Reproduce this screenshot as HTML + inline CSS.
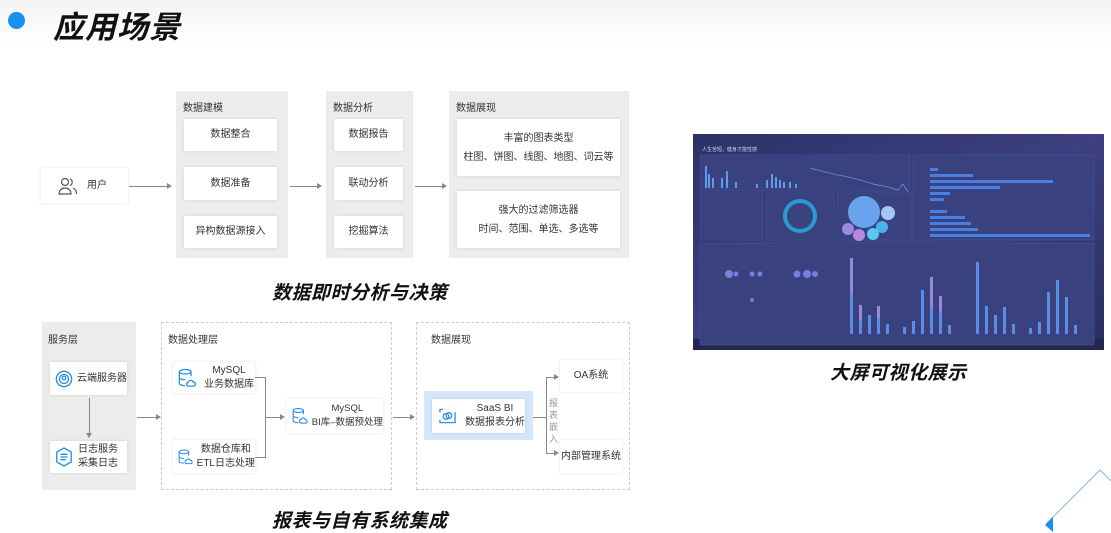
<!DOCTYPE html>
<html><head><meta charset="utf-8">
<style>
*{margin:0;padding:0;box-sizing:border-box}
body{width:1111px;height:532px;overflow:hidden;background:#fff;position:relative;font-family:"Liberation Sans","Noto Sans CJK SC",sans-serif;color:#333}
.a{position:absolute}
.hdr{left:0;top:0;width:1111px;height:48px;background:linear-gradient(#f4f4f4,#fff)}
.dot{left:8px;top:12px;width:17px;height:17px;border-radius:50%;background:#1890f0}
.title{left:53px;top:2px;font-size:31px;font-weight:bold;font-style:italic;color:#111;letter-spacing:1px}
.gp{background:#ececec}
.wb{background:#fff;box-shadow:0 0 3px rgba(0,0,0,.12);display:flex;align-items:center;justify-content:center;text-align:center;font-size:10px;line-height:14px;color:#333;white-space:nowrap}
.wb span{white-space:nowrap}
.pt{font-size:10px;color:#333}
.cap{font-size:19px;font-weight:bold;font-style:italic;color:#111;letter-spacing:.5px}
.hl{background:#888;height:1px}
.dash{border:1px dashed #ccc}
.arr{position:absolute;width:0;height:0;border-top:3px solid transparent;border-bottom:3px solid transparent;border-left:5px solid #888}
.vl{background:#888;width:1px}
</style></head><body>
<div class="a hdr"></div>
<div class="a dot"></div>
<div class="a title">应用场景</div>

<div class="a wb" style="left:41px;top:168px;width:87px;height:35px;justify-content:flex-start;padding-left:16px">
<svg width="22" height="20" viewBox="0 0 22 20" fill="none" stroke="#555" stroke-width="1.2"><circle cx="8" cy="6" r="3.5"/><path d="M2 18c0-4 3-6 6-6s6 2 6 6z"/><path d="M13 3a3.5 3.5 0 0 1 0 6.5"/><path d="M16 12c2 .8 3.5 3 3.5 6"/></svg>
<span style="margin-left:8px">用户</span></div>
<div class="a hl" style="left:129px;top:186px;width:38px"></div><div class="arr" style="left:167px;top:183px"></div>

<div class="a gp" style="left:176px;top:91px;width:112px;height:167px"></div>
<div class="a pt" style="left:183px;top:99px">数据建模</div>
<div class="a wb" style="left:184px;top:119px;width:93px;height:32px">数据整合</div>
<div class="a wb" style="left:184px;top:167px;width:93px;height:33px">数据准备</div>
<div class="a wb" style="left:184px;top:216px;width:93px;height:32px">异构数据源接入</div>
<div class="a hl" style="left:290px;top:186px;width:27px"></div><div class="arr" style="left:317px;top:183px"></div>

<div class="a gp" style="left:326px;top:91px;width:87px;height:167px"></div>
<div class="a pt" style="left:333px;top:99px">数据分析</div>
<div class="a wb" style="left:334px;top:119px;width:69px;height:32px">数据报告</div>
<div class="a wb" style="left:334px;top:167px;width:69px;height:33px">联动分析</div>
<div class="a wb" style="left:334px;top:216px;width:69px;height:32px">挖掘算法</div>
<div class="a hl" style="left:415px;top:186px;width:27px"></div><div class="arr" style="left:442px;top:183px"></div>

<div class="a gp" style="left:449px;top:91px;width:180px;height:167px"></div>
<div class="a pt" style="left:456px;top:99px">数据展现</div>
<div class="a wb" style="left:457px;top:119px;width:163px;height:57px;flex-direction:column;line-height:19px">丰富的图表类型<br>柱图、饼图、线图、地图、词云等</div>
<div class="a wb" style="left:457px;top:191px;width:163px;height:57px;flex-direction:column;line-height:19px">强大的过滤筛选器<br>时间、范围、单选、多选等</div>
<div class="a cap" style="left:272px;top:278px">数据即时分析与决策</div>

<div class="a gp" style="left:42px;top:322px;width:94px;height:168px"></div>
<div class="a pt" style="left:48px;top:331px">服务层</div>
<div class="a wb" style="left:50px;top:362px;width:77px;height:33px;justify-content:flex-start;padding-left:5px">
<svg width="18" height="18" viewBox="0 0 20 20" fill="none" stroke="#2a8de8" stroke-width="1.5"><circle cx="10" cy="10" r="8.5"/><circle cx="10" cy="10" r="5"/><circle cx="10" cy="9" r="2"/></svg><span style="margin-left:4px">云端服务器</span></div>
<div class="a vl" style="left:89px;top:398px;height:36px"></div>
<div class="arr" style="left:86px;top:433px;border-left:3px solid transparent;border-right:3px solid transparent;border-top:5px solid #888;border-bottom:0"></div>
<div class="a wb" style="left:50px;top:441px;width:77px;height:32px;justify-content:flex-start;padding-left:5px">
<svg width="18" height="20" viewBox="0 0 20 22" fill="none" stroke="#2a8de8" stroke-width="1.5"><path d="M10 1l8 4.5v11L10 21 2 16.5v-11z"/><path d="M6 8h8M6 11h8M6 14h6"/></svg><span style="margin-left:5px;text-align:left">日志服务<br>采集日志</span></div>
<div class="a hl" style="left:137px;top:417px;width:19px"></div><div class="arr" style="left:156px;top:414px"></div>

<div class="a dash" style="left:161px;top:322px;width:231px;height:168px"></div>
<div class="a pt" style="left:168px;top:331px">数据处理层</div>
<svg width="0" height="0" style="position:absolute"><defs><symbol id="db" viewBox="0 0 20 22"><g fill="none" stroke="#2a8de8" stroke-width="1.4"><ellipse cx="8" cy="4" rx="6.5" ry="2.5"/><path d="M1.5 4v13c0 1.4 3 2.5 6.5 2.5M14.5 4v5M1.5 10.5c0 1.4 3 2.5 6.5 2.5"/><path d="M11 20h7a2.3 2.3 0 0 0-1-4.4 3 3 0 0 0-5.6 0A2.3 2.3 0 0 0 11 20z"/></g></symbol></defs></svg>
<div class="a wb" style="left:173px;top:362px;width:82px;height:31px;justify-content:flex-start;padding-left:5px"><svg width="18" height="20"><use href="#db"/></svg><span style="margin-left:8px">MySQL<br>业务数据库</span></div>
<div class="a wb" style="left:173px;top:440px;width:82px;height:33px;justify-content:flex-start;padding-left:5px"><svg width="18" height="20"><use href="#db"/></svg><span style="margin-left:4px">数据仓库和<br>ETL日志处理</span></div>
<div class="a hl" style="left:255px;top:377px;width:10px"></div>
<div class="a hl" style="left:255px;top:457px;width:10px"></div>
<div class="a vl" style="left:265px;top:377px;height:81px"></div>
<div class="a hl" style="left:265px;top:417px;width:15px"></div><div class="arr" style="left:280px;top:414px"></div>
<div class="a wb" style="left:287px;top:399px;width:96px;height:34px;justify-content:flex-start;padding-left:5px"><svg width="18" height="20"><use href="#db"/></svg><span style="margin-left:4px;font-size:9.5px">MySQL<br>BI库–数据预处理</span></div>
<div class="a hl" style="left:393px;top:417px;width:18px"></div><div class="arr" style="left:410px;top:414px"></div>

<div class="a dash" style="left:416px;top:322px;width:214px;height:168px"></div>
<div class="a pt" style="left:431px;top:331px">数据展现</div>
<div class="a" style="left:424px;top:391px;width:109px;height:49px;background:#d5e5fb"></div>
<div class="a wb" style="left:432px;top:399px;width:93px;height:34px;justify-content:flex-start;padding-left:7px">
<svg width="18" height="16" viewBox="0 0 18 16" fill="none" stroke="#2a8de8" stroke-width="1.4"><path d="M1 4V1h3M1 12v3h16V4"/><circle cx="7.5" cy="8.5" r="3"/><circle cx="10.5" cy="7.5" r="3"/></svg><span style="margin-left:9px">SaaS BI<br>数据报表分析</span></div>
<div class="a hl" style="left:533px;top:417px;width:13px"></div>
<div class="a vl" style="left:546px;top:377px;height:77px"></div>
<div class="a hl" style="left:546px;top:377px;width:8px"></div><div class="arr" style="left:554px;top:374px"></div>
<div class="a hl" style="left:546px;top:453px;width:8px"></div><div class="arr" style="left:554px;top:450px"></div>
<div class="a" style="left:549px;top:397px;width:10px;font-size:9px;line-height:12px;color:#999">报表嵌入</div>
<div class="a wb" style="left:560px;top:360px;width:62px;height:32px">OA系统</div>
<div class="a wb" style="left:560px;top:440px;width:62px;height:33px">内部管理系统</div>
<div class="a cap" style="left:272px;top:506px">报表与自有系统集成</div>

<svg class="a" style="left:693px;top:134px" width="411" height="216" viewBox="0 0 411 216">
<defs><linearGradient id="bg" x1="0" y1="0" x2="1" y2="1"><stop offset="0" stop-color="#2c3266"/><stop offset=".5" stop-color="#3d3f80"/><stop offset="1" stop-color="#2a2f5e"/></linearGradient></defs>
<rect width="411" height="216" fill="url(#bg)"/>
<rect x="0" y="205" width="411" height="11" fill="#232650"/>
<text x="9" y="17" font-size="5" fill="#cfd6ff">人生苦短，健身才能性感</text>
<g fill="#39427f" stroke="#4b56a0" stroke-width=".5">
<rect x="7" y="21" width="104" height="36"/><rect x="113" y="21" width="104" height="36"/><rect x="220" y="21" width="181" height="85"/>
<rect x="7" y="59" width="63" height="47"/><rect x="73" y="59" width="68" height="47"/><rect x="144" y="59" width="74" height="47"/>
<rect x="7" y="109" width="394" height="102"/></g>
<g fill="#5b9de8">
<rect x="12" y="32" width="2" height="22"/><rect x="15" y="40" width="2" height="14"/><rect x="19" y="44" width="2" height="10"/><rect x="28" y="44" width="2" height="10"/><rect x="33" y="37" width="2" height="17"/><rect x="42" y="48" width="2" height="6"/><rect x="63" y="50" width="2" height="4"/><rect x="73" y="46" width="2" height="8"/><rect x="78" y="40" width="2" height="14"/><rect x="82" y="43" width="2" height="11"/><rect x="86" y="46" width="2" height="8"/><rect x="90" y="48" width="2" height="6"/><rect x="96" y="48" width="2" height="6"/><rect x="102" y="50" width="2" height="4"/>
</g>
<polyline points="117,34 140,40 160,44 180,50 195,53 205,56 210,50 215,58" fill="none" stroke="#6f8fd8" stroke-width=".8"/>
<g fill="#4a7fe2"><rect x="237" y="34" width="8" height="3"/><rect x="237" y="40" width="43" height="3"/><rect x="237" y="46" width="123" height="3"/><rect x="237" y="52" width="70" height="3"/><rect x="237" y="58" width="20" height="3"/><rect x="237" y="64" width="14" height="3"/><rect x="237" y="76" width="17" height="3"/><rect x="237" y="82" width="35" height="3"/><rect x="237" y="88" width="41" height="3"/><rect x="237" y="94" width="48" height="3"/><rect x="237" y="100" width="160" height="3"/></g>
<circle cx="107" cy="82" r="15" fill="none" stroke="#2c9ad0" stroke-width="4"/>
<circle cx="171" cy="78" r="16" fill="#6aa3ee"/><circle cx="195" cy="79" r="7" fill="#a6c8f2"/><circle cx="189" cy="93" r="6" fill="#45b6ea"/><circle cx="180" cy="100" r="6" fill="#5ac8f2"/><circle cx="166" cy="101" r="6" fill="#b48ae0"/><circle cx="155" cy="95" r="6" fill="#9a8ae0"/>
<g fill="#7a7ee0"><circle cx="36" cy="140" r="4"/><circle cx="43" cy="140" r="2.5"/><circle cx="59" cy="140" r="2.5"/><circle cx="67" cy="140" r="2.5"/><circle cx="104" cy="140" r="3.5"/><circle cx="114" cy="140" r="4"/><circle cx="122" cy="140" r="3"/><circle cx="59" cy="166" r="2"/></g>
<g fill="#5a8de8"><rect x="157" y="124" width="3" height="76"/><rect x="166" y="171" width="3" height="29"/><rect x="175" y="181" width="3" height="19"/><rect x="184" y="172" width="3" height="28"/><rect x="193" y="190" width="3" height="10"/><rect x="210" y="193" width="3" height="7"/><rect x="219" y="187" width="3" height="13"/><rect x="228" y="156" width="3" height="44"/><rect x="237" y="143" width="3" height="57"/><rect x="246" y="162" width="3" height="38"/><rect x="255" y="191" width="3" height="9"/>
<rect x="283" y="128" width="3" height="72"/><rect x="292" y="172" width="3" height="28"/><rect x="301" y="181" width="3" height="19"/><rect x="310" y="173" width="3" height="27"/><rect x="319" y="190" width="3" height="10"/><rect x="336" y="194" width="3" height="6"/><rect x="345" y="188" width="3" height="12"/><rect x="354" y="158" width="3" height="42"/><rect x="363" y="146" width="3" height="54"/><rect x="372" y="163" width="3" height="37"/><rect x="381" y="191" width="3" height="9"/></g>
<g fill="#a88ad8" opacity=".8"><rect x="157" y="124" width="3" height="35"/><rect x="166" y="171" width="3" height="15"/><rect x="184" y="172" width="3" height="12"/><rect x="237" y="143" width="3" height="30"/><rect x="246" y="162" width="3" height="15"/></g>
</svg>
<div class="a cap" style="left:830px;top:358px">大屏可视化展示</div>

<svg class="a" style="left:1040px;top:465px" width="71" height="67" viewBox="0 0 71 67"><polyline points="7,58 60,5 71,16" fill="none" stroke="#86b6dc" stroke-width="1"/><polygon points="13,52 13,67 5,60" fill="#1890f0"/></svg>
</body></html>
